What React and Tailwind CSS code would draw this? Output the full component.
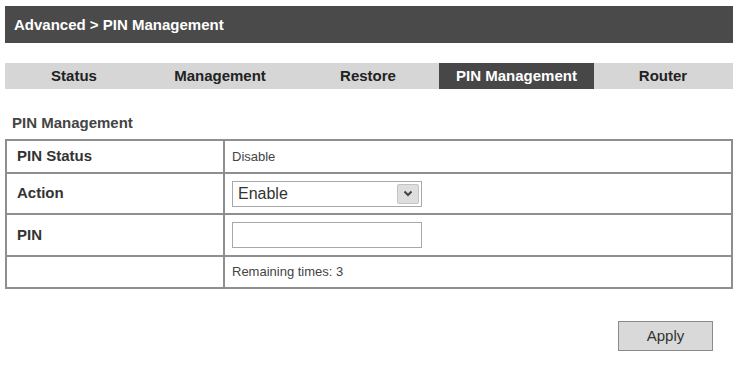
import React from "react";

const tabs = [
  { label: "Status", w: "w-[138px]" },
  { label: "Management", w: "w-[154px]" },
  { label: "Restore", w: "w-[142px]" },
  { label: "PIN Management", w: "w-[155px]", active: true },
  { label: "Router", w: "w-[138px]" },
];

export default function App() {
  return (
    <div className="w-[741px] h-[365px] bg-white font-['Liberation_Sans',Arial,sans-serif] text-[#333] overflow-hidden">
      <div className="ml-[5px] w-[728px] pt-[6px]">
        <div className="h-[37px] bg-[#4a4a4a] flex items-center pl-[9px] pt-[2px] text-white font-bold text-[15px]">
          Advanced &gt; PIN Management
        </div>
        <div className="mt-[20px] h-[26px] bg-[#d6d6d6] flex">
          {tabs.map((t) => (
            <div
              key={t.label}
              className={`${t.w} flex items-center justify-center font-bold text-[15px] ${
                t.active ? "bg-[#474747] text-white" : "text-[#222]"
              }`}
            >
              {t.label}
            </div>
          ))}
        </div>
        <div className="mt-[26px] pl-[7px] font-bold text-[15px] text-[#444] leading-[16px]">
          PIN Management
        </div>
        <table className="mt-[8px] w-[728px] border-collapse border-2 border-[#8e8e8e]">
          <tbody>
            <tr className="h-[33px]">
              <td className="w-[218px] border-2 border-[#8e8e8e] pl-[10px] font-bold text-[15px] text-[#333]">PIN Status</td>
              <td className="border-2 border-[#8e8e8e] pl-[7px] text-[13px] text-[#444]">Disable</td>
            </tr>
            <tr className="h-[41px]">
              <td className="border-2 border-[#8e8e8e] pl-[10px] font-bold text-[15px] text-[#333]">Action</td>
              <td className="border-2 border-[#8e8e8e] pl-[7px]">
                <div className="w-[190px] h-[26px] border border-[#a8a8a8] bg-white flex items-center justify-between pl-[5px] pr-[2px]">
                  <span className="text-[16px] text-[#333]">Enable</span>
                  <span className="w-[22px] h-[20px] bg-[#dedede] border border-[#c4c4c4] rounded-[2px] flex items-center justify-center">
                    <svg width="10" height="7" viewBox="0 0 10 7">
                      <path d="M1.5 1.5 L5 5 L8.5 1.5" fill="none" stroke="#444" strokeWidth="2" />
                    </svg>
                  </span>
                </div>
              </td>
            </tr>
            <tr className="h-[42px]">
              <td className="border-2 border-[#8e8e8e] pl-[10px] font-bold text-[15px] text-[#333]">PIN</td>
              <td className="border-2 border-[#8e8e8e] pl-[7px]">
                <div className="w-[190px] h-[26px] border border-[#a8a8a8] bg-white" />
              </td>
            </tr>
            <tr className="h-[32px]">
              <td className="border-2 border-[#8e8e8e]"></td>
              <td className="border-2 border-[#8e8e8e] pl-[7px] text-[13px] text-[#444]">Remaining times: 3</td>
            </tr>
          </tbody>
        </table>
        <div className="flex justify-end mt-[32px] pr-[20px]">
          <div className="w-[95px] h-[30px] bg-[#d9d9d9] border border-[#8a8a8a] flex items-center justify-center text-[15px] text-[#333]">
            Apply
          </div>
        </div>
      </div>
    </div>
  );
}
